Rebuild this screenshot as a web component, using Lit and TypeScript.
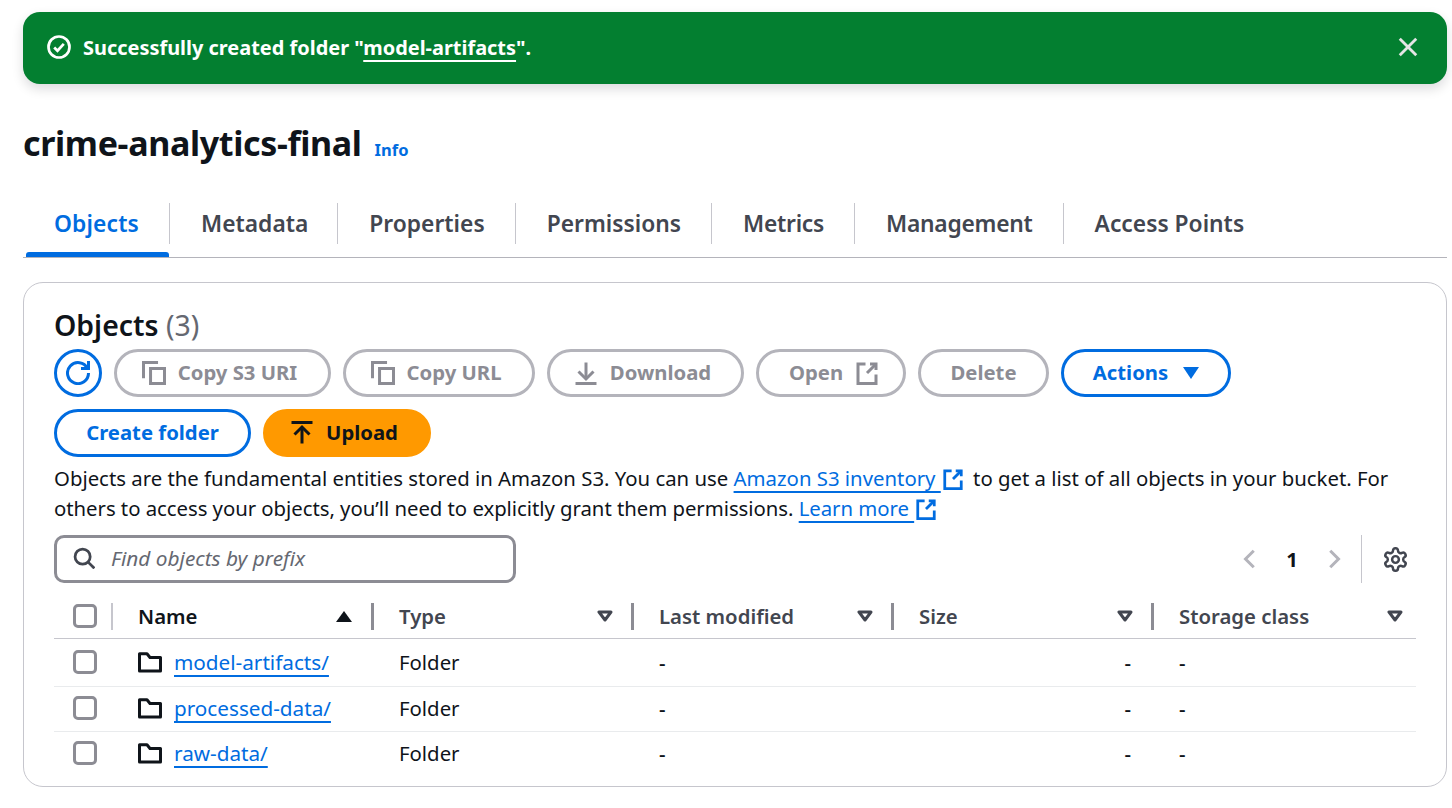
import { LitElement, html, css, svg } from "lit";
import { customElement } from "lit/decorators.js";

const icon = (paths: unknown, cls = "") =>
  html`<svg class="icon ${cls}" viewBox="0 0 16 16" fill="none" stroke="currentColor" stroke-width="2">${paths}</svg>`;

const refreshIcon = svg`<path d="M10 5h5V0"/><path d="M15 8a7 7 0 1 1-.7-3"/>`;
const copyIcon = svg`<path d="M5.7 5H15v10H5.7z"/><path d="M1 11.5V1h9.7"/>`;
const downloadIcon = svg`<path d="M1 15h14"/><path d="M8 1v10"/><path d="m3 7 5 5 5-5"/>`;
const uploadIcon = svg`<path d="M1 1h14"/><path d="M8 15V5"/><path d="m3 9 5-5 5 5"/>`;
const externalIcon = svg`<path d="M14 9v6H2V2h5"/><path d="M10 2h4v4"/><path d="M14 2 8 8"/>`;
const folderIcon = svg`<path d="M1 2.5h5l2 2.5h7v9H1z" stroke-linejoin="round"/>`;

const columns = [
  { name: "Name", sorted: true },
  { name: "Type" },
  { name: "Last modified" },
  { name: "Size" },
  { name: "Storage class", last: true },
];

const rows = ["model-artifacts/", "processed-data/", "raw-data/"];

@customElement("app-root")
export class AppRoot extends LitElement {
  static styles = css`
    :host {
      display: block;
      box-sizing: border-box;
      width: 1452px;
      padding: 12px 5px 0 23px;
      font-family: "Noto Sans", sans-serif;
      font-size: 20.35px;
      color: #0f141a;
      background: #fff;
    }
    * {
      box-sizing: border-box;
    }
    .icon {
      display: block;
      flex: none;
      width: 20px;
      height: 20px;
    }
    a {
      color: #006ce0;
      text-decoration: underline;
      text-decoration-thickness: 2px;
      text-underline-offset: 5px;
    }
    .flash {
      display: flex;
      align-items: center;
      height: 72px;
      padding: 0 28px 2px 24px;
      background: #037f30;
      color: #fff;
      border-radius: 17px;
      box-shadow: 0 5px 12px rgba(0, 7, 22, 0.14);
      font-size: 19.95px;
      font-weight: 700;
    }
    .flash .check {
      width: 24px;
      height: 24px;
      margin-right: 12px;
    }
    .flash a {
      color: #fff;
    }
    .flash .close {
      width: 22px;
      height: 22px;
      margin-left: auto;
      color: #e5e5e5;
    }
    .title {
      display: flex;
      align-items: baseline;
      height: 55px;
      margin-top: 32px;
    }
    .title h1 {
      margin: 0;
      font-size: 34px;
      line-height: 55px;
      font-weight: 700;
      letter-spacing: -0.35px;
    }
    .title a {
      margin-left: 13px;
      font-size: 16.5px;
      font-weight: 700;
      text-decoration: none;
    }
    .tabs {
      display: flex;
      height: 55px;
      margin-top: 32px;
      border-bottom: 1px solid #b4b4bb;
    }
    .tab {
      position: relative;
      display: flex;
      align-items: flex-start;
      height: 41px;
      padding: 3px 30px 0 31px;
      border-right: 1px solid #c6c6cd;
      font-size: 22.8px;
      line-height: 36px;
      font-weight: 600;
      color: #424650;
    }
    .tab:first-child {
      color: #006ce0;
      letter-spacing: 0.15px;
    }
    .tab:nth-child(2) {
      padding-right: 29px;
    }
    .tab:nth-child(5),
    .tab:nth-child(6) {
      letter-spacing: -0.25px;
    }
    .tab:last-child {
      border-right: none;
    }
    .tab.active::after {
      content: "";
      position: absolute;
      left: 3px;
      right: 0;
      top: 49px;
      height: 5px;
      border-radius: 3px 3px 0 0;
      background: #006ce0;
    }
    .card {
      height: 505px;
      margin-top: 24px;
      padding: 24px 30px 0 30px;
      border: 1px solid #c6c6cd;
      border-radius: 20px;
    }
    .card h2 {
      margin: 0;
      height: 42px;
      font-size: 28.4px;
      line-height: 36px;
      font-weight: 600;
    }
    .card h2 span {
      font-weight: 400;
      color: #656871;
    }
    .actions {
      display: flex;
      flex-wrap: wrap;
      gap: 12px;
    }
    .btn {
      display: flex;
      align-items: center;
      justify-content: center;
      gap: 12px;
      height: 48px;
      padding-bottom: 2px;
      border: 3px solid #006ce0;
      border-radius: 24px;
      background: #fff;
      color: #006ce0;
      font-size: 20.3px;
      font-weight: 700;
    }
    .btn .icon {
      width: 24px;
      height: 24px;
      margin-top: 2px;
    }
    .btn.off {
      border-color: #b4b4bb;
      color: #8c8c94;
    }
    .btn.primary {
      border-color: #ff9900;
      background: #ff9900;
      color: #0f141a;
    }
    .btn .caret {
      width: 0;
      height: 0;
      margin: 2px 0 0 3px;
      border-left: 8px solid transparent;
      border-right: 8px solid transparent;
      border-top: 12px solid #006ce0;
    }
    .refresh {
      width: 48px;
    }
    .lead {
      padding-right: 6px;
    }
    .trail {
      padding-left: 6px;
    }
    .copy-uri { width: 217px; }
    .copy-url { width: 192px; }
    .download { width: 197px; }
    .open { width: 150px; }
    .delete { width: 131px; }
    .menu { width: 170px; }
    .create { width: 197px; }
    .upload { width: 168px; }
    .intro {
      margin-top: 6px;
      line-height: 30px;
      color: #0f141a;
    }
    .intro .line {
      white-space: nowrap;
    }
    .intro .line.tight {
      letter-spacing: -0.04px;
    }
    .intro .icon {
      display: inline-block;
      width: 22px;
      height: 22px;
      margin: 0 4px 0 1px;
      vertical-align: -4px;
      color: #006ce0;
    }
    .toolbar {
      display: flex;
      align-items: center;
      height: 48px;
      margin-top: 12px;
    }
    .search {
      display: flex;
      align-items: center;
      gap: 16px;
      width: 462px;
      height: 48px;
      padding: 0 16px 2px;
      border: 3px solid #8c8c94;
      border-radius: 10px;
      color: #656871;
      font-size: 20.8px;
      font-style: italic;
    }
    .search .icon {
      width: 22px;
      height: 22px;
      color: #424650;
    }
    .pager {
      display: flex;
      align-items: center;
      height: 48px;
      margin-left: auto;
      color: #b4b4bb;
    }
    .pager > .icon {
      width: 24px;
      height: 24px;
    }
    .pager b {
      width: 60px;
      text-align: center;
      color: #0f141a;
      font-weight: 700;
    }
    .pager .gear-wrap {
      display: flex;
      align-items: center;
      height: 48px;
      margin-left: 15px;
      padding: 0 7px 0 20px;
      border-left: 1px solid #c6c6cd;
      color: #424650;
    }
    .pager .gear {
      width: 27px;
      height: 27px;
    }
    .grid {
      display: grid;
      grid-template-columns: 59px 261px 260px 260px 260px 262px;
      width: 1362px;
    }
    .head {
      height: 56px;
      border-bottom: 1px solid #c6c6cd;
      color: #424650;
      font-weight: 600;
    }
    .cell {
      display: flex;
      align-items: center;
      padding-left: 25px;
    }
    .cell:first-child {
      padding-left: 19px;
    }
    .head .cell {
      height: 55px;
      padding-top: 11px;
    }
    .head .cell.sorted {
      color: #0f141a;
    }
    .sort {
      margin-left: auto;
      width: 0;
      height: 0;
    }
    .sort.up {
      margin-right: 19px;
      border-left: 8px solid transparent;
      border-right: 8px solid transparent;
      border-bottom: 11px solid #0f141a;
    }
    .sort.down {
      width: 16px;
      height: 12px;
      margin-right: 18px;
    }
    .last .sort.down {
      margin-right: 13px;
    }
    .sep {
      flex: none;
      width: 3px;
      height: 27px;
      background: #8c8c94;
    }
    .sep.light {
      width: 2px;
      margin-left: auto;
      margin-right: 0;
      background: #c6c6cd;
    }
    .box {
      flex: none;
      width: 24px;
      height: 24px;
      border: 3px solid #8c8c94;
      border-radius: 5px;
      background: #fff;
    }
    .row {
      height: 45.5px;
      border-bottom: 1px solid #e9ebed;
    }
    .row:last-child {
      border-bottom: none;
    }
    .row.first {
      height: 47.5px;
      padding-top: 2px;
    }
    .row .cell {
      height: 44.5px;
      padding-bottom: 2px;
    }
    .row .name {
      gap: 12px;
    }
    .row .name a {
      font-size: 20.7px;
    }
    .row .name .icon {
      width: 24px;
      height: 24px;
      color: #0f141a;
    }
    .row .size {
      justify-content: flex-end;
      padding-right: 23px;
    }
    .row .dash {
      font-weight: 500;
    }
  `;

  render() {
    return html`
      <div class="flash">
        <svg class="icon check" viewBox="0 0 16 16" fill="none" stroke="currentColor" stroke-width="1.8">
          <circle cx="8" cy="8" r="7"></circle>
          <path d="M4.8 8.3 7 10.5l4.2-4.6"></path>
        </svg>
        <span>Successfully created folder "<a href="#">model-artifacts</a>".</span>
        ${icon(svg`<path d="m2 2 12 12"/><path d="M14 2 2 14"/>`, "close")}
      </div>

      <div class="title">
        <h1>crime-analytics-final</h1>
        <a href="#">Info</a>
      </div>

      <div class="tabs">
        ${["Objects", "Metadata", "Properties", "Permissions", "Metrics", "Management", "Access Points"].map(
          (t, i) => html`<div class="tab ${i === 0 ? "active" : ""}">${t}</div>`
        )}
      </div>

      <div class="card">
        <h2>Objects <span>(3)</span></h2>
        <div class="actions">
          <div class="btn refresh">${icon(refreshIcon)}</div>
          <div class="btn off lead copy-uri">${icon(copyIcon)}Copy S3 URI</div>
          <div class="btn off lead copy-url">${icon(copyIcon)}Copy URL</div>
          <div class="btn off lead download">${icon(downloadIcon)}Download</div>
          <div class="btn off trail open">Open${icon(externalIcon)}</div>
          <div class="btn off delete">Delete</div>
          <div class="btn menu">Actions<span class="caret"></span></div>
          <div class="btn create">Create folder</div>
          <div class="btn primary lead upload">${icon(uploadIcon)}Upload</div>
        </div>
        <div class="intro">
          <div class="line">Objects are the fundamental entities stored in Amazon S3. You can use <a href="#">Amazon S3 inventory ${icon(externalIcon)}</a> to get a list of all objects in your bucket. For</div>
          <div class="line tight">others to access your objects, you’ll need to explicitly grant them permissions. <a href="#">Learn more ${icon(externalIcon)}</a></div>
        </div>
        <div class="toolbar">
          <div class="search">
            <svg class="icon" viewBox="0 0 16 16" fill="none" stroke="currentColor" stroke-width="2">
              <circle cx="7" cy="7" r="5.5"></circle>
              <path d="m11 11 4.5 4.5"></path>
            </svg>
            Find objects by prefix
          </div>
          <div class="pager">
            ${icon(svg`<path d="m10.5 2.5-5.5 5.5 5.5 5.5"/>`)}
            <b>1</b>
            ${icon(svg`<path d="m5.5 2.5 5.5 5.5-5.5 5.5"/>`)}
            <div class="gear-wrap">
              <svg class="icon gear" viewBox="0 0 24 24" fill="none" stroke="currentColor" stroke-width="2.2">
                <path d="M12.22 2h-.44a2 2 0 0 0-2 2v.18a2 2 0 0 1-1 1.73l-.43.25a2 2 0 0 1-2 0l-.15-.08a2 2 0 0 0-2.73.73l-.22.38a2 2 0 0 0 .73 2.73l.15.1a2 2 0 0 1 1 1.72v.51a2 2 0 0 1-1 1.74l-.15.09a2 2 0 0 0-.73 2.73l.22.38a2 2 0 0 0 2.73.73l.15-.08a2 2 0 0 1 2 0l.43.25a2 2 0 0 1 1 1.73V20a2 2 0 0 0 2 2h.44a2 2 0 0 0 2-2v-.18a2 2 0 0 1 1-1.73l.43-.25a2 2 0 0 1 2 0l.15.08a2 2 0 0 0 2.73-.73l.22-.39a2 2 0 0 0-.73-2.73l-.15-.08a2 2 0 0 1-1-1.74v-.5a2 2 0 0 1 1-1.74l.15-.09a2 2 0 0 0 .73-2.73l-.22-.38a2 2 0 0 0-2.73-.73l-.15.08a2 2 0 0 1-2 0l-.43-.25a2 2 0 0 1-1-1.73V4a2 2 0 0 0-2-2z"></path>
                <circle cx="12" cy="12" r="3"></circle>
              </svg>
            </div>
          </div>
        </div>

        <div class="grid head">
          <div class="cell"><span class="box"></span><span class="sep light"></span></div>
          ${columns.map(
            (c) => html`<div class="cell ${c.sorted ? "sorted" : ""} ${c.last ? "last" : ""}">
              ${c.name}
              ${c.sorted
                ? html`<span class="sort up"></span>`
                : html`<svg class="sort down" viewBox="0 0 16 12" fill="none" stroke="#424650" stroke-width="3"><path d="M2 2h12l-6 8z" stroke-linejoin="round"></path></svg>`}
              ${c.last ? "" : html`<span class="sep"></span>`}
            </div>`
          )}
        </div>
        ${rows.map(
          (r, i) => html`<div class="grid row ${i === 0 ? "first" : ""}">
            <div class="cell"><span class="box"></span></div>
            <div class="cell name">${icon(folderIcon)}<a href="#">${r}</a></div>
            <div class="cell">Folder</div>
            <div class="cell dash">-</div>
            <div class="cell size dash">-</div>
            <div class="cell dash">-</div>
          </div>`
        )}
      </div>
    `;
  }
}
